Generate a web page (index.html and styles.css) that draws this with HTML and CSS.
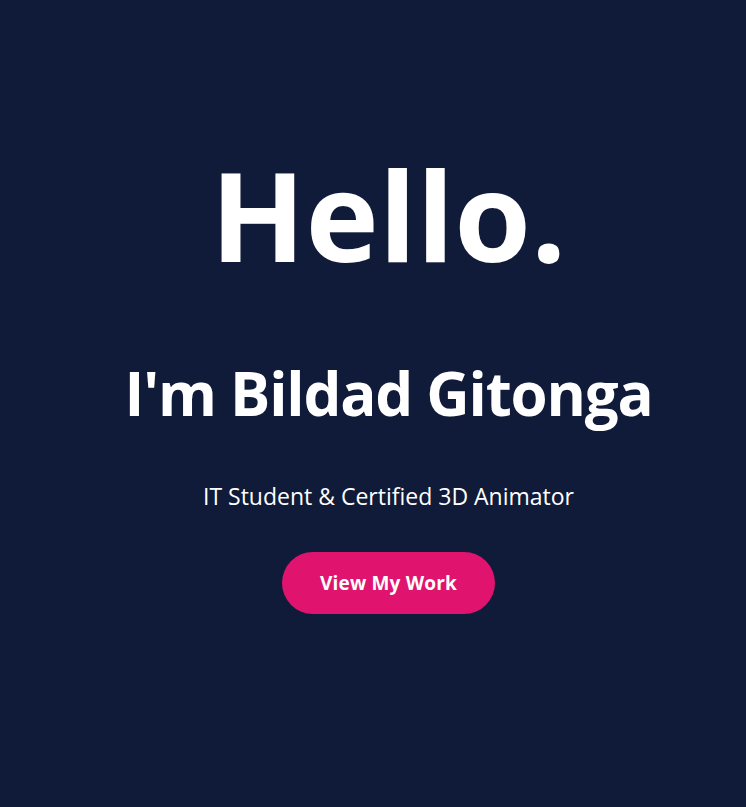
FILE: index.html
```html
<!DOCTYPE html>
<html lang="en">
<head>
<meta charset="utf-8">
<title>Bildad Gitonga</title>
<link rel="stylesheet" href="styles.css">
</head>
<body>
<section class="hero">
  <h1 class="hello">Hello.</h1>
  <h2 class="name">I'm Bildad Gitonga</h2>
  <p class="tagline">IT Student &amp; Certified 3D Animator</p>
  <a class="btn" href="#work">View My Work</a>
</section>
</body>
</html>
```
FILE: styles.css
```css
html, body {
  margin: 0;
  padding: 0;
  background: #101b39;
}
body {
  font-family: "Open Sans", "Noto Sans", sans-serif;
  color: #ffffff;
}
.hero {
  min-height: 807px;
  box-sizing: border-box;
  display: flex;
  flex-direction: column;
  align-items: center;
  padding: 152px 0 0 31px;
  text-align: center;
}
.hello {
  margin: 0;
  font-size: 124px;
  font-weight: 700;
  line-height: 1;
}
.name {
  margin: 87px 0 0;
  font-size: 60px;
  font-weight: 700;
  line-height: 1;
  letter-spacing: -1.2px;
}
.tagline {
  margin: 62px 0 0;
  font-size: 23px;
  line-height: 1;
}
.btn {
  margin-top: 44px;
  display: inline-flex;
  align-items: center;
  justify-content: center;
  width: 213px;
  height: 62px;
  border-radius: 31px;
  background: #e0146e;
  color: #ffffff;
  font-size: 19px;
  font-weight: 700;
  letter-spacing: 0.2px;
  text-decoration: none;
}
```
